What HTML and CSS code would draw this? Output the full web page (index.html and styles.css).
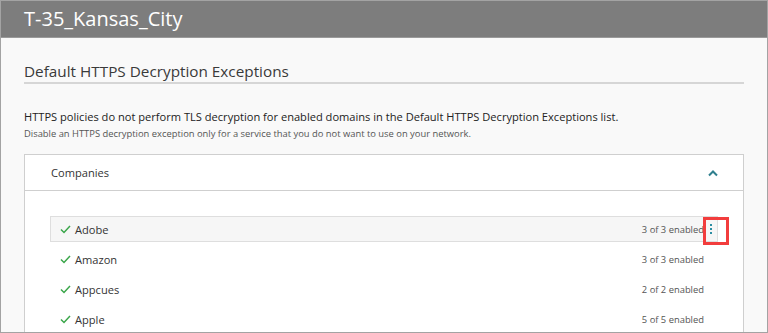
FILE: index.html
```html
<!DOCTYPE html>
<html>
<head>
<meta charset="utf-8">
<link rel="stylesheet" href="styles.css">
</head>
<body>
<div class="frame">
  <header class="topbar">T-35_Kansas_City</header>
  <main class="content">
    <h1 class="page-title">Default HTTPS Decryption Exceptions</h1>
    <p class="lead">HTTPS policies do not perform TLS decryption for enabled domains in the Default HTTPS Decryption Exceptions list.</p>
    <p class="note">Disable an HTTPS decryption exception only for a service that you do not want to use on your network.</p>
    <section class="panel">
      <div class="panel-head">
        <span>Companies</span>
        <svg class="chev" width="12" height="8" viewBox="0 0 12 8"><path d="M2 6.5 L6 2.5 L10 6.5" fill="none" stroke="#2f7f8e" stroke-width="2"/></svg>
      </div>
      <ul class="rows">
        <li class="row active">
          <svg class="check" width="11" height="9" viewBox="0 0 11 9"><path d="M1 4.5 L4 7.5 L10 1" fill="none" stroke="#3aa64a" stroke-width="1.5"/></svg>
          <span class="name">Adobe</span>
          <span class="count">3 of 3 enabled</span>
          <span class="kebab"><i></i><i></i><i></i></span>
          <span class="highlight"></span>
        </li>
        <li class="row">
          <svg class="check" width="11" height="9" viewBox="0 0 11 9"><path d="M1 4.5 L4 7.5 L10 1" fill="none" stroke="#3aa64a" stroke-width="1.5"/></svg>
          <span class="name">Amazon</span>
          <span class="count">3 of 3 enabled</span>
          <span class="kebab"></span>
        </li>
        <li class="row">
          <svg class="check" width="11" height="9" viewBox="0 0 11 9"><path d="M1 4.5 L4 7.5 L10 1" fill="none" stroke="#3aa64a" stroke-width="1.5"/></svg>
          <span class="name">Appcues</span>
          <span class="count">2 of 2 enabled</span>
          <span class="kebab"></span>
        </li>
        <li class="row">
          <svg class="check" width="11" height="9" viewBox="0 0 11 9"><path d="M1 4.5 L4 7.5 L10 1" fill="none" stroke="#3aa64a" stroke-width="1.5"/></svg>
          <span class="name">Apple</span>
          <span class="count">5 of 5 enabled</span>
          <span class="kebab"></span>
        </li>
      </ul>
    </section>
  </main>
</div>
</body>
</html>
```
FILE: styles.css
```css
* { box-sizing: border-box; }
html, body { margin: 0; padding: 0; }
body {
  width: 768px;
  height: 333px;
  overflow: hidden;
  font-family: "Open Sans", "Liberation Sans", sans-serif;
  color: #333;
  background: #fff;
}
.frame {
  width: 768px;
  height: 333px;
  border: 1px solid #a3a3a3;
  background: #f9f9f9;
  overflow: hidden;
}
.topbar {
  height: 37px;
  background: #7d7d7d;
  color: #fff;
  font-size: 20px;
  line-height: 36px;
  padding-left: 23px;
  border-bottom: 1px solid #9a9a9a;
}
.content {
  padding: 22px 23px 0 23px;
}
.page-title {
  margin: 0;
  font-size: 15.3px;
  font-weight: 400;
  line-height: 22px;
  color: #3a3a3a;
  border-bottom: 2px solid #d6d6d6;
}
.lead {
  margin: 25px 0 0 0;
  font-size: 11.1px;
  line-height: 16px;
  color: #222;
}
.note {
  margin: 2px 0 0 0;
  font-size: 9.4px;
  line-height: 14px;
  color: #555;
}
.panel {
  margin-top: 13px;
  background: #fff;
  border: 1px solid #cfcfcf;
  border-bottom: none;
}
.panel-head {
  height: 36px;
  border-bottom: 1px solid #cfcfcf;
  display: flex;
  align-items: center;
  justify-content: space-between;
  padding: 0 24px 0 26px;
  font-size: 11.1px;
  color: #333;
}
.chev { display: block; }
.rows {
  list-style: none;
  margin: 0;
  padding: 25px 25px 0 25px;
  display: flex;
  flex-direction: column;
  gap: 4px;
}
.row {
  position: relative;
  height: 26px;
  border: 1px solid transparent;
  display: flex;
  align-items: center;
  padding-left: 9px;
  font-size: 11.1px;
}
.row.active {
  background: #f6f6f6;
  border-color: #dedede;
}
.check { display: block; margin-right: 4px; }
.name { flex: 1; color: #333; }
.count {
  font-size: 9.4px;
  color: #555;
}
.kebab {
  width: 13px;
  display: flex;
  flex-direction: column;
  align-items: center;
  gap: 2px;
}
.kebab i {
  display: block;
  width: 2px;
  height: 2px;
  background: #2c8ea3;
}
.highlight {
  position: absolute;
  left: 652px;
  top: 0px;
  width: 26px;
  height: 28px;
  border: 3px solid #f23d3d;
}
```
